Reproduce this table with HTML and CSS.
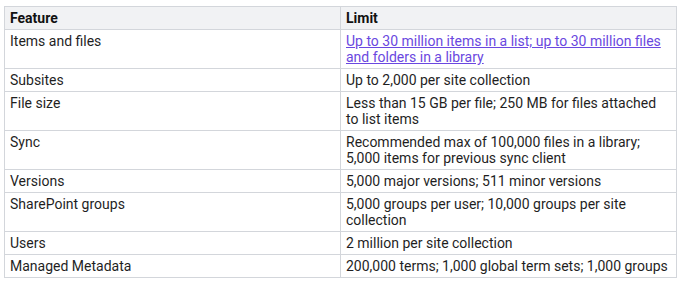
FILE: index.html
```html
<!DOCTYPE html>
<html>
<head>
<meta charset="utf-8">
<link rel="stylesheet" href="styles.css">
</head>
<body>
<table class="limits">
  <colgroup><col class="c1"><col class="c2"></colgroup>
  <thead>
    <tr><th>Feature</th><th>Limit</th></tr>
  </thead>
  <tbody>
    <tr><td>Items and files</td><td><a class="link" href="#">Up to 30 million items in a list; up to 30 million files and folders in a library</a></td></tr>
    <tr><td>Subsites</td><td>Up to 2,000 per site collection</td></tr>
    <tr><td>File size</td><td>Less than 15 GB per file; 250 MB for files attached to list items</td></tr>
    <tr><td>Sync</td><td>Recommended max of 100,000 files in a library; 5,000 items for previous sync client</td></tr>
    <tr><td>Versions</td><td>5,000 major versions; 511 minor versions</td></tr>
    <tr><td>SharePoint groups</td><td>5,000 groups per user; 10,000 groups per site collection</td></tr>
    <tr><td>Users</td><td>2 million per site collection</td></tr>
    <tr><td>Managed Metadata</td><td>200,000 terms; 1,000 global term sets; 1,000 groups</td></tr>
  </tbody>
</table>
</body>
</html>
```
FILE: styles.css
```css
html, body { margin: 0; background: #fff; }
body {
  padding: 6px 4px;
  font-family: Roboto, "Liberation Sans", sans-serif;
  font-size: 14px;
  line-height: 16px;
  color: #1f1f1f;
}
.limits {
  border-collapse: collapse;
  width: 672px;
  table-layout: fixed;
}
.c1 { width: 336px; }
.c2 { width: 336px; }
.limits th, .limits td {
  border: 1px solid #d3d6db;
  padding: 3px 5px;
  text-align: left;
  vertical-align: top;
}
.limits th {
  background: #f1f2f4;
  font-weight: 700;
  color: #111;
}
.link {
  color: #6a48e0;
  text-decoration: underline;
}
```
